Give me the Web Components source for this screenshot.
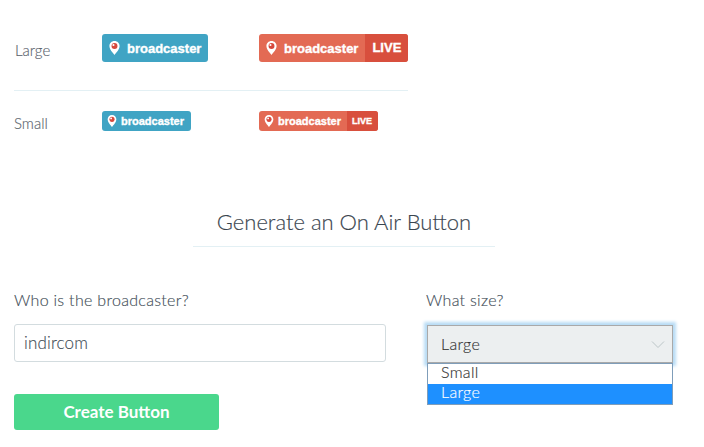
<!DOCTYPE html>
<html><head><meta charset="utf-8">
<style>
html,body{margin:0;padding:0;background:#fff;overflow:hidden}
body{font-family:Lato,"Open Sans",sans-serif;color:#4a5560;width:704px;height:447px}
</style></head><body>
<template id="t-badge"><style>
:host{display:inline-flex;height:28px;border-radius:3px;overflow:hidden;font:700 13px/29px "Liberation Sans",Arial,sans-serif;color:#fff;background:#40a4c4;vertical-align:top;-webkit-text-stroke:.35px #fff}
:host([live]){background:#e36a54}
:host([small]){height:20px;font-size:11px;line-height:20px}
.m{display:flex;align-items:center;padding:0 7px 0 7px;gap:7px;flex:1;white-space:nowrap}
:host([small]) .m{padding:0 7px 0 5px;gap:4px}
:host([small][live]) .m{padding-right:6px}
svg{width:11px;height:14px;display:block;flex:none}
:host([small]) svg{width:10px;height:12px}
.l{display:none;background:#d84f3d;padding:0 7px 0 7px;line-height:28px}
:host([live]) .l{display:block}
:host([small]) .l{font-size:9px;padding:0 6px 0 5px;line-height:20px}
</style><div class="m"><svg viewBox="0 0 12 16"><path d="M6 0C2.700 0 .2 2.500 .2 5.800 .2 9.600 4 13.600 6 16c2-2.400 5.800-6.400 5.800-10.200C11.800 2.500 9.300 0 6 0z" fill="#fff"/><circle cx="6" cy="5.800" r="3.400" fill="#d6493d"/><circle cx="4.800" cy="4.500" r="1.200" fill="#fff"/></svg><span><slot></slot></span></div><div class="l">LIVE</div></template>

<template id="t-row"><style>
:host{display:grid;grid-template-columns:88px 157px 149px;width:394px;font:300 15px/20px Lato,sans-serif;color:#5b656e;-webkit-text-stroke:.15px #5b656e}
.label{align-self:start;height:0;padding:6px 0 0 1px;box-sizing:content-box}
:host([small]) .label{padding:2px 0 0 0}
::slotted(oa-badge){-webkit-text-stroke:.35px #fff}
</style><div class="label"><slot name="label"></slot></div><div><slot name="a"></slot></div><div><slot name="b"></slot></div></template>

<template id="t-title"><style>
:host{display:block;width:302px;margin:0 auto;text-align:center;font:300 22px/28px Lato,sans-serif;color:#3a454f;-webkit-text-stroke:.15px #3a454f;border-bottom:1px solid #e3f0f4;padding-bottom:10px;white-space:nowrap}
</style><slot></slot></template>

<template id="t-field"><style>
:host{display:block;font:300 16px/20px Lato,sans-serif;color:#444f59;-webkit-text-stroke:.15px #444f59}
.lab{height:20px;margin-bottom:14px;letter-spacing:.3px}
:host([offset]) .lab{margin:0 0 15px -1px}
</style><div class="lab"><slot name="label"></slot></div><slot></slot></template>

<template id="t-input"><style>
:host{display:block;height:38px;box-sizing:border-box;border:1px solid #d3dcdf;border-radius:3px;background:#fff;padding:0 9px;font:300 17px/35px Lato,sans-serif;color:#444f59;letter-spacing:.15px}
</style><slot></slot></template>

<template id="t-select"><style>
:host{display:block;position:relative;height:38px;box-sizing:border-box;border:1px solid #a9a9a9;background:#eceff0;box-shadow:0 0 3px 3px #b8dcf5;font:300 16px/35px Lato,sans-serif;color:#333;-webkit-text-stroke:.15px #333;padding:0 13px;letter-spacing:.3px}
svg{position:absolute;right:7px;top:14px;width:14px;height:9px}
.list{position:absolute;left:-1px;right:-1px;top:37px;box-sizing:border-box;border:1px solid #7f9db9;background:#fff;font:300 16px/16px Lato,sans-serif;z-index:2}
.opt{padding:0 13px;height:20px;color:#333}
.sel{background:#1e90ff;color:#fff;-webkit-text-stroke:.15px #fff}
</style><slot></slot><svg viewBox="0 0 14 9"><path d="M1 1.500l6 6 6-6" fill="none" stroke="#bcc6c8" stroke-width="1"/></svg>
<div class="list"><div class="opt">Small</div><div class="opt sel">Large</div></div></template>

<template id="t-btn"><style>
:host{display:block;width:205px;height:36px;border-radius:3px;background:#4ad78c;color:#fff;text-align:center;font:700 17px/35px Lato,sans-serif;-webkit-text-stroke:0;letter-spacing:0}
</style><slot></slot></template>

<template id="t-page"><style>
:host{display:block;padding:34px 0 0 14px;width:704px;box-sizing:border-box}
.hr{width:394px;height:1px;background:#e3f0f4;margin:28px 0 20px}
.ti{width:660px;margin-top:77px}
.form{display:grid;grid-template-columns:372px 246px;column-gap:41px;margin-top:43px}
.btn{margin-top:31px}
</style>
<slot name="r1"></slot><div class="hr"></div><slot name="r2"></slot>
<div class="ti"><slot name="title"></slot></div>
<div class="form"><slot name="f1"></slot><slot name="f2"></slot></div>
<div class="btn"><slot name="btn"></slot></div></template>

<oa-page>
<oa-row slot="r1"><span slot="label">Large</span><oa-badge slot="a">broadcaster</oa-badge><oa-badge slot="b" live>broadcaster</oa-badge></oa-row>
<oa-row slot="r2" small><span slot="label">Small</span><oa-badge slot="a" small>broadcaster</oa-badge><oa-badge slot="b" live small>broadcaster</oa-badge></oa-row>
<oa-title slot="title">Generate an On Air Button</oa-title>
<oa-field slot="f1"><span slot="label">Who is the broadcaster?</span><oa-input>indircom</oa-input></oa-field>
<oa-field slot="f2" offset><span slot="label">What size?</span><oa-select>Large</oa-select></oa-field>
<oa-btn slot="btn">Create Button</oa-btn>
</oa-page>
<script>
for(const [n,t] of [['oa-badge','t-badge'],['oa-row','t-row'],['oa-title','t-title'],['oa-field','t-field'],['oa-input','t-input'],['oa-select','t-select'],['oa-btn','t-btn'],['oa-page','t-page']]){
customElements.define(n,class extends HTMLElement{constructor(){super();this.attachShadow({mode:'open'}).appendChild(document.getElementById(t).content.cloneNode(true))}});
}
</script>
</body></html>
